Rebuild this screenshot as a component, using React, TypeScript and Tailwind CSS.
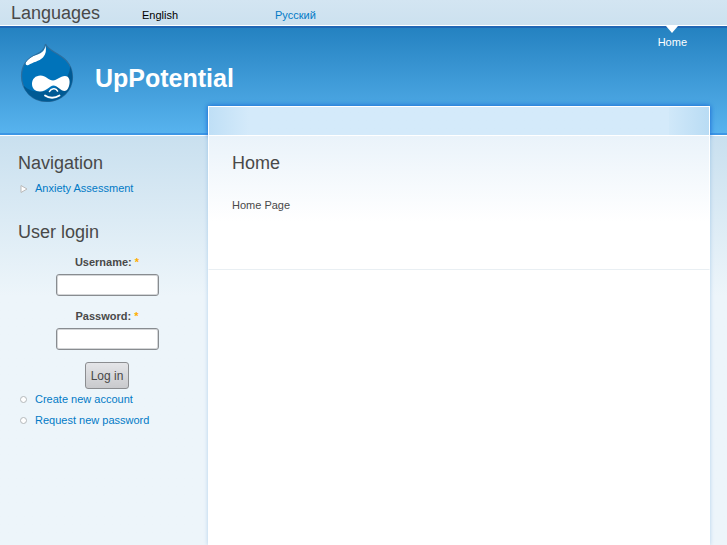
import { useState } from 'react'

const languages = [
  { label: 'English', href: '#en', active: true },
  { label: 'Русский', href: '#ru', active: false },
]

const accountLinks = [
  { label: 'Create new account', href: '#register' },
  { label: 'Request new password', href: '#password' },
]

const dropPath =
  'M25.5 1C26.500 4 30 6.500 35 9.500C43 14 52.500 20 52.500 34C52.500 48 41 58.500 27 58.500C12 58.500 1.500 47 1.500 33C1.500 23 7 15.500 16 11.500C21.500 9 25 6 25.500 1Z'

function Logo() {
  return (
    <svg viewBox="0 0 54 60" className="h-[60px] w-[54px] shrink-0" aria-hidden="true">
      <defs>
        <clipPath id="drop">
          <path d={dropPath} />
        </clipPath>
      </defs>
      <path d={dropPath} fill="#0073ba" stroke="#2e6f9f" strokeWidth="1.2" />
      <g clipPath="url(#drop)">
        <path d="M50 21C51 33 42 45 26 48C17 49.500 9 48 4 43L4 60H54V20Z" fill="#005a94" />
        {/* Highlight */}
        <path d="M25.500 2.500C26.500 7 26 11 23 14.500C19 18.500 13 19 8.500 22C6.500 23 5 21.500 6 19C8 15.500 12 13.500 17 11.800C22 10 25 7 25.500 2.500Z" fill="#fff" />
      </g>
      <path
        d="M20.500 32.500C25.500 32.500 29 37.500 33 37.500C37 37.500 40 33 45 33C48.500 33 50 36.500 49.500 40.500C49 45 47 48 44.500 48C41 48 37 42.500 33.500 42.500C29.500 42.500 27 48.500 20 48.500C15 48.500 12 45.500 12 41C12 36 15.500 32.500 20.500 32.500Z"
        fill="#fff"
      />
      <path d="M29.500 48.500C31 45.500 36 44.500 37.500 48" fill="none" stroke="#fff" strokeWidth="1.600" strokeLinecap="round" />
      <path d="M25 52.500C29 55.500 35 55.500 39.500 52.500" fill="none" stroke="#fff" strokeWidth="1.800" strokeLinecap="round" />
    </svg>
  )
}

function LanguageBar() {
  return (
    <div className="flex h-[26px] items-center border-b border-white bg-linear-to-b from-[#d3e5f2] to-[#cce1ef] pl-[11px]">
      <h2 className="w-[131px] text-lg leading-6 text-[#494949]">Languages</h2>
      <ul className="flex pt-1 leading-5">
        {languages.map((language) => (
          <li key={language.label} className="w-[133px]">
            <a href={language.href} className={language.active ? 'text-black' : 'text-[#027ac6]'}>
              {language.label}
            </a>
          </li>
        ))}
      </ul>
    </div>
  )
}

function Header() {
  return (
    <header className="flex h-[109px] items-start justify-between border-t-2 border-b-2 border-t-[#2067b4] border-b-[#3d97e5] bg-linear-to-b from-[#2482c1] to-[#57b3ee]">
      <div className="flex items-center pt-[15px] pl-5">
        <Logo />
        <h1 className="pt-[9px] pl-[21px] text-[25px] leading-8 font-bold">
          <a href="#home" className="text-white">UpPotential</a>
        </h1>
      </div>
      <nav className="mr-10 -mt-[2px] flex flex-col items-center">
        <svg viewBox="0 0 12 7" className="h-[7px] w-3" aria-hidden="true">
          <path d="M0 0H12L6 7Z" fill="#fff" />
        </svg>
        <a href="#home" className="leading-[18px] text-white">Home</a>
      </nav>
    </header>
  )
}

function LoginForm() {
  const [username, setUsername] = useState('')
  const [password, setPassword] = useState('')

  return (
    <form onSubmit={(e) => e.preventDefault()} className="flex flex-col items-center pt-2">
      <label htmlFor="username" className="leading-5 font-bold">
        Username: <span className="text-[#ffae00]">*</span>
      </label>
      <input
        id="username"
        type="text"
        value={username}
        onChange={(e) => setUsername(e.target.value)}
        className="mt-[2px] h-[22px] w-[103px] rounded-[3px] border border-[#888c90] bg-white px-1 shadow-[inset_0_0_0_1px_#d4d6d8]"
      />
      <label htmlFor="password" className="mt-[10px] leading-5 font-bold">
        Password: <span className="text-[#ffae00]">*</span>
      </label>
      <input
        id="password"
        type="password"
        value={password}
        onChange={(e) => setPassword(e.target.value)}
        className="mt-[2px] h-[22px] w-[103px] rounded-[3px] border border-[#888c90] bg-white px-1 shadow-[inset_0_0_0_1px_#d4d6d8]"
      />
      <button
        type="submit"
        className="mt-3 h-[27px] rounded-[3px] border border-[#8b8d90] bg-linear-to-b from-[#e4e5e8] to-[#c9cacd] px-[5px] text-xs text-[#494949]"
      >
        Log in
      </button>
    </form>
  )
}

function Sidebar() {
  return (
    <aside className="w-[208px] shrink-0 px-[18px] pt-[15px]">
      <h2 className="text-lg leading-6">Navigation</h2>
      <ul className="pt-[3px]">
        <li className="flex items-center leading-[21px]">
          <svg viewBox="0 0 8 8" className="mr-[7px] ml-[2px] h-2 w-2" aria-hidden="true">
            <path d="M1 0.500L7 4L1 7.500Z" fill="#fff" stroke="#b9b9b9" />
          </svg>
          <a href="#anxiety-assessment" className="text-[#027ac6]">Anxiety Assessment</a>
        </li>
      </ul>

      <h2 className="pt-[21px] text-lg leading-6">User login</h2>
      <div className="pl-[6px]">
        <LoginForm />
      </div>
      <ul>
        {accountLinks.map((link) => (
          <li key={link.label} className="flex items-center leading-[21px]">
            <span className="mr-2 ml-[2px] h-[7px] w-[7px] rounded-full border border-[#b4b8ba] bg-white" />
            <a href={link.href} className="text-[#027ac6]">{link.label}</a>
          </li>
        ))}
      </ul>
    </aside>
  )
}

function Content() {
  return (
    <main className="relative -mt-[30px] mr-[17px] min-w-0 flex-1 bg-white shadow-[0_0_4px_#2d7fd050]">
      <div className="h-[29px] border-x border-t border-white bg-linear-to-r from-[#bfdff6] via-[#d4eafa] via-8% to-[#d4eafa] shadow-[0_0_5px_#1667d8]">
        <div className="ml-auto h-full w-10 bg-linear-to-r from-[#d0e8f9] to-[#b9dcf4]" />
      </div>
      <div className="relative border border-white border-b-[#e9eff3] bg-linear-to-b from-[#eaf3fa] to-white to-[86px] px-[23px] pt-[15px] pb-[54px]">
        <h2 className="text-lg leading-6">Home</h2>
        <p className="pt-5 leading-5">Home Page</p>
      </div>
    </main>
  )
}

export default function App() {
  return (
    <div className="flex min-h-screen flex-col bg-[#edf5fa] font-['Liberation_Sans',Arial,sans-serif] text-[11px] text-[#494949]">
      <LanguageBar />
      <Header />
      <div className="flex flex-1 border-t border-white bg-linear-to-b from-[#c9e0ef] to-[#edf5fa] to-[160px]">
        <Sidebar />
        <Content />
      </div>
    </div>
  )
}
